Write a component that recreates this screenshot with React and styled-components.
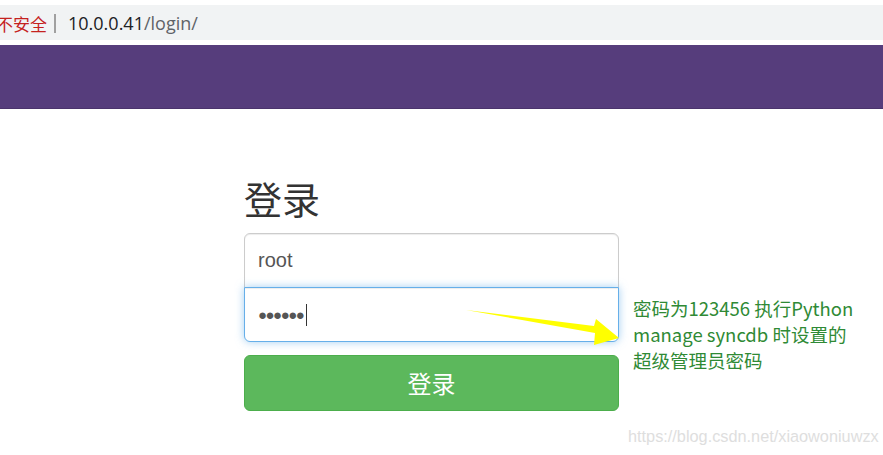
import React from 'react'
import styled, { createGlobalStyle } from 'styled-components'

const Global = createGlobalStyle`
  html, body { margin: 0; padding: 0; background: #fff; }
  body { font-family: "Liberation Sans", Arial, "Noto Sans CJK SC", sans-serif; overflow: hidden; }
`

const Page = styled.div`
  width: 883px;
  height: 455px;
  position: relative;
  overflow: hidden;
  background: #fff;
`

const Chrome = styled.div`
  height: 40px;
  padding-top: 5px;
  box-sizing: border-box;
  background: #fff;
`

const AddressBar = styled.div`
  height: 35px;
  background: #f1f3f4;
  display: flex;
  align-items: center;
  padding-top: 1px;
  box-sizing: border-box;
`

const Insecure = styled.span`
  color: #c5221f;
  margin-left: -4px;
  font-family: "Noto Sans CJK SC", sans-serif;
  font-size: 17px;
`

const Divider = styled.span`
  width: 2px;
  height: 19px;
  background: #a0a0a0;
  margin: 0 12px 0 7px;
`

const Host = styled.span`
  color: #202124;
  font-family: "Open Sans", "Liberation Sans", sans-serif;
  font-size: 18px;
`

const Path = styled.span`
  color: #5f6368;
  font-family: "Open Sans", "Liberation Sans", sans-serif;
  font-size: 18px;
`

const Gap = styled.div`
  height: 5px;
  background: #fff;
`

const Navbar = styled.div`
  height: 64px;
  background: #563d7c;
  border-bottom: 1px solid #4b346c;
  box-sizing: border-box;
`

const Main = styled.div`
  display: flex;
  padding: 65px 0 0 244px;
`

const Form = styled.div`
  width: 375px;
  display: flex;
  flex-direction: column;
  position: relative;
`

const Heading = styled.h2`
  margin: 0 0 12px;
  font-family: "Noto Sans CJK SC", sans-serif;
  font-weight: 400;
  font-size: 38px;
  line-height: 47px;
  color: #333;
`

const Input = styled.div`
  height: 55px;
  box-sizing: border-box;
  border: 1px solid ${p => (p.$focus ? '#66afe9' : '#ccc')};
  border-radius: ${p => (p.$first ? '6px 6px 0 0' : '0 0 6px 6px')};
  margin-top: ${p => (p.$first ? '0' : '-1px')};
  box-shadow: ${p => (p.$focus ? 'inset 0 1px 1px rgba(0,0,0,.075), 0 0 8px rgba(102,175,233,.6)' : 'inset 0 1px 1px rgba(0,0,0,.075)')};
  display: flex;
  align-items: center;
  padding-left: 13px;
  font-size: 20px;
  color: #555;
  background: #fff;
  position: relative;
  z-index: ${p => (p.$focus ? 1 : 0)};
`

const Dots = styled.span`
  font-size: 15px;
  letter-spacing: -1.5px;
  color: #555;
`

const Caret = styled.span`
  width: 1px;
  height: 22px;
  background: #333;
  margin-left: 3px;
`

const Button = styled.button`
  margin-top: 13px;
  height: 56px;
  border: 1px solid #4cae4c;
  border-radius: 6px;
  background: #5cb85c;
  color: #fff;
  font-family: "Noto Sans CJK SC", sans-serif;
  font-size: 24px;
  line-height: 1;
  cursor: pointer;
`

const Arrow = styled.svg`
  position: absolute;
  left: 222px;
  top: 135px;
  z-index: 2;
  overflow: visible;
`

const Note = styled.div`
  margin: 121px 0 0 14px;
  width: 226px;
  color: #2f8a35;
  font-family: "Noto Sans CJK SC", sans-serif;
  font-size: 18.5px;
  line-height: 26px;
`

const Watermark = styled.div`
  position: absolute;
  left: 628px;
  top: 427px;
  color: #dedede;
  font-family: "Liberation Sans", Arial, sans-serif;
  font-size: 16.3px;
`

export default function App() {
  return (
    <Page>
      <Global />
      <Chrome>
        <AddressBar>
          <Insecure>不安全</Insecure>
          <Divider />
          <Host>10.0.0.41</Host>
          <Path>/login/</Path>
        </AddressBar>
      </Chrome>
      <Gap />
      <Navbar />
      <Main>
        <Form>
          <Heading>登录</Heading>
          <Input $first>root</Input>
          <Input $focus>
            <Dots>●●●●●●</Dots>
            <Caret />
          </Input>
          <Button>登录</Button>
          <Arrow width="160" height="40" viewBox="0 0 160 40">
            <polygon points="0,1 128,17 130,10 153,29 128,36 129,24" fill="#ffff00" />
          </Arrow>
        </Form>
        <Note>密码为123456 执行Python manage syncdb 时设置的超级管理员密码</Note>
      </Main>
      <Watermark>https://blog.csdn.net/xiaowoniuwzx</Watermark>
    </Page>
  )
}
